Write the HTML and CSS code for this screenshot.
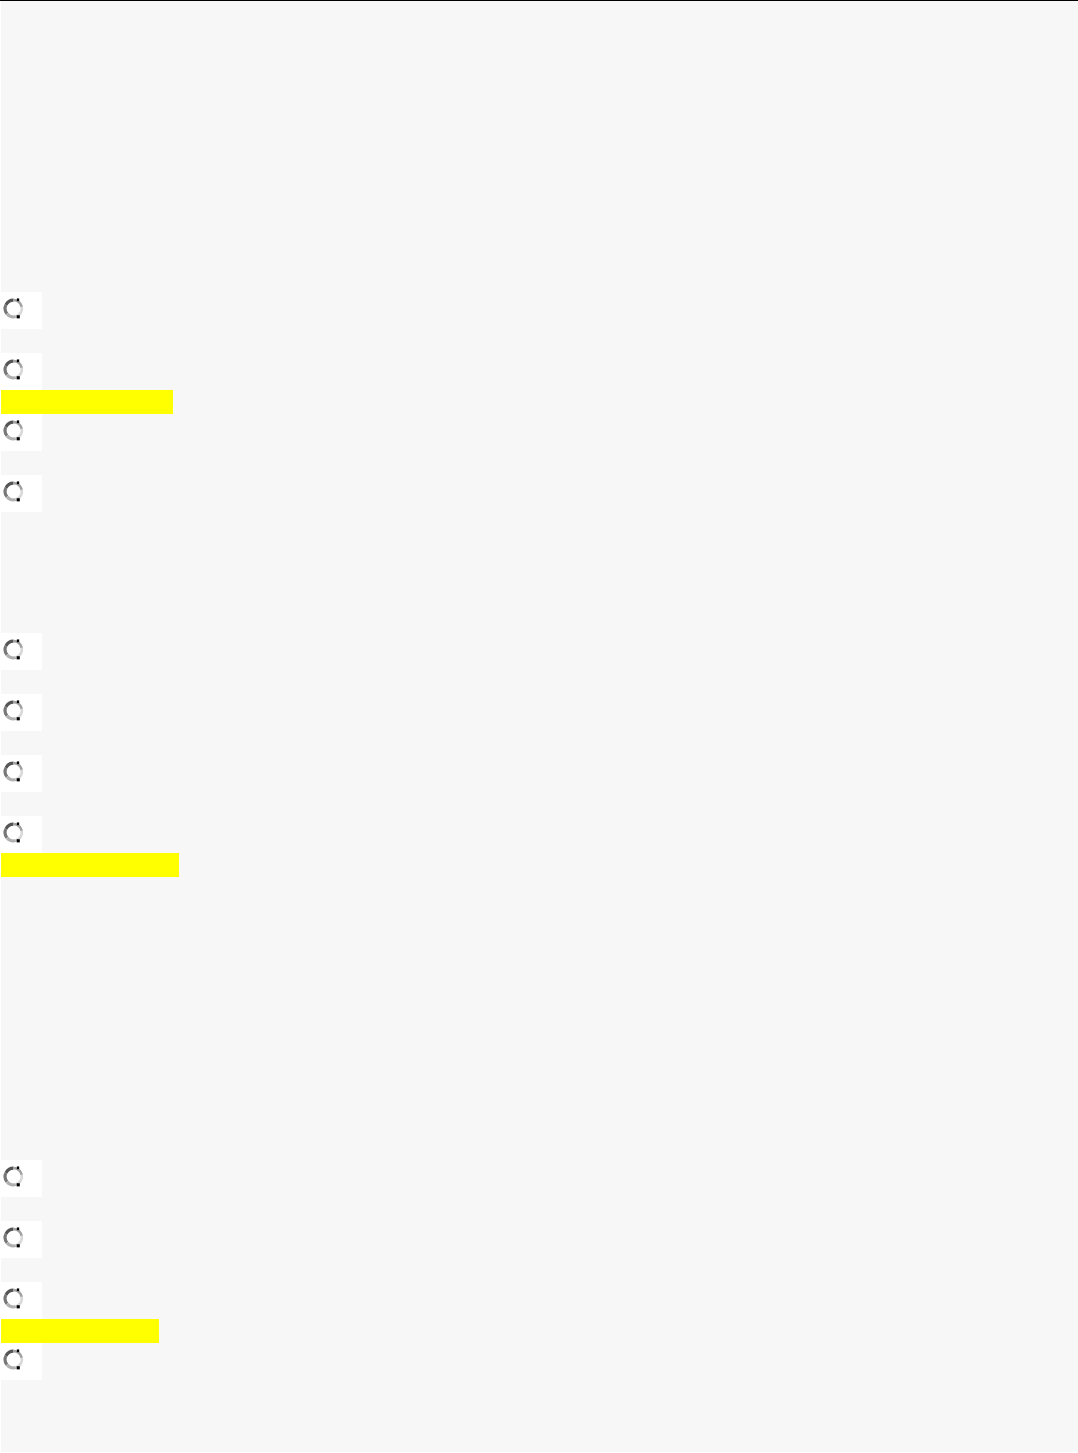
FILE: index.html
```html
<!DOCTYPE html>
<html>
<head>
<meta charset="utf-8">
<link rel="stylesheet" href="styles.css">
</head>
<body>
<div class="topline"></div>
<div class="page">
  <div class="group g1">
    <div class="item"><div class="box"><svg class="spin" viewBox="0 0 20 20"><use href="#sp"/></svg></div><div class="gap"></div></div>
    <div class="item"><div class="box"><svg class="spin" viewBox="0 0 20 20"><use href="#sp"/></svg></div><div class="gap"><span class="mark w1"></span></div></div>
    <div class="item"><div class="box"><svg class="spin" viewBox="0 0 20 20"><use href="#sp"/></svg></div><div class="gap"></div></div>
    <div class="item"><div class="box"><svg class="spin" viewBox="0 0 20 20"><use href="#sp"/></svg></div><div class="gap"></div></div>
  </div>
  <div class="group g2">
    <div class="item"><div class="box"><svg class="spin" viewBox="0 0 20 20"><use href="#sp"/></svg></div><div class="gap"></div></div>
    <div class="item"><div class="box"><svg class="spin" viewBox="0 0 20 20"><use href="#sp"/></svg></div><div class="gap"></div></div>
    <div class="item"><div class="box"><svg class="spin" viewBox="0 0 20 20"><use href="#sp"/></svg></div><div class="gap"></div></div>
    <div class="item"><div class="box"><svg class="spin" viewBox="0 0 20 20"><use href="#sp"/></svg></div><div class="gap"><span class="mark w2"></span></div></div>
  </div>
  <div class="group g3">
    <div class="item"><div class="box"><svg class="spin" viewBox="0 0 20 20"><use href="#sp"/></svg></div><div class="gap"></div></div>
    <div class="item"><div class="box"><svg class="spin" viewBox="0 0 20 20"><use href="#sp"/></svg></div><div class="gap"></div></div>
    <div class="item"><div class="box"><svg class="spin" viewBox="0 0 20 20"><use href="#sp"/></svg></div><div class="gap"><span class="mark w3"></span></div></div>
    <div class="item"><div class="box"><svg class="spin" viewBox="0 0 20 20"><use href="#sp"/></svg></div><div class="gap"></div></div>
  </div>
</div>
<svg class="defs" width="0" height="0">
  <defs>
    <g id="sp">
      <path d="M10 2 A8 8 0 0 0 2.8 6.5" fill="none" stroke="#555" stroke-width="3"/>
      <path d="M2.8 6.5 A8 8 0 0 0 3.8 15" fill="none" stroke="#777" stroke-width="3"/>
      <path d="M3.8 15 A8 8 0 0 0 12.2 17.7" fill="none" stroke="#b0b0b0" stroke-width="3"/>
      <path d="M12.2 17.7 A8 8 0 0 0 17.8 8.3" fill="none" stroke="#d8d8d8" stroke-width="2.6"/>
      <path d="M17.8 8.3 A8 8 0 0 0 10 2" fill="none" stroke="#a0a0a0" stroke-width="2.6"/>
      <rect x="13.2" y="0.4" width="2.2" height="2.6" fill="#000"/>
      <rect x="13" y="16.4" width="3" height="3" fill="#000"/>
    </g>
  </defs>
</svg>
</body>
</html>
```

FILE: styles.css
```css
html, body {
  margin: 0;
  padding: 0;
  background: #ffffff;
}
.topline {
  height: 1px;
  background: #000000;
}
.page {
  margin-left: 1px;
  height: 1451px;
  background: #f7f7f7;
  padding-top: 291px;
  box-sizing: border-box;
}
.group {
  display: flex;
  flex-direction: column;
}
.g2 { margin-top: 97px; }
.g3 { margin-top: 283px; }
.item {
  display: flex;
  flex-direction: column;
}
.box {
  width: 41px;
  height: 37px;
  background: #ffffff;
  box-sizing: border-box;
  padding: 6px 0 0 2px;
}
.spin {
  display: block;
  width: 21px;
  height: 21px;
}
.gap {
  height: 24px;
  display: flex;
}
.mark {
  display: block;
  height: 24px;
  background: #ffff00;
}
.w1 { width: 172px; }
.w2 { width: 178px; }
.w3 { width: 158px; }
.defs {
  position: absolute;
  width: 0;
  height: 0;
}
```
